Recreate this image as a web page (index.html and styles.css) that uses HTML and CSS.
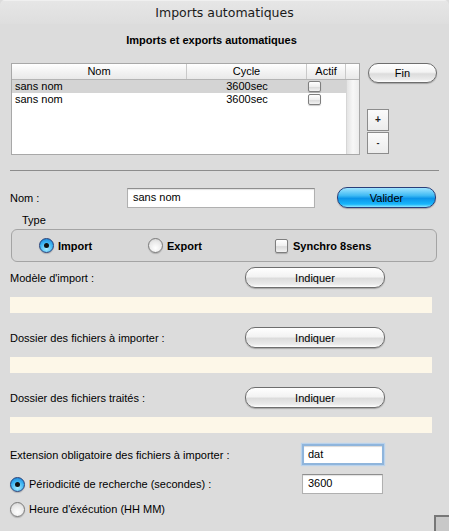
FILE: index.html
```html
<!DOCTYPE html>
<html lang="fr">
<head>
<meta charset="utf-8">
<title>Imports automatiques</title>
<link rel="stylesheet" href="styles.css">
</head>
<body>
<div class="win">
  <div class="titlebar">Imports automatiques</div>
  <div class="subtitle">Imports et exports automatiques</div>

  <div class="top">
    <div class="table">
      <div class="thead">
        <div class="th c-nom">Nom</div>
        <div class="th c-cycle">Cycle</div>
        <div class="th c-actif">Actif</div>
        <div class="th c-sb"></div>
      </div>
      <div class="tbody">
        <div class="rows">
          <div class="tr sel">
            <span class="td c-nom">sans nom</span>
            <span class="td c-cycle">3600sec</span>
            <span class="td c-actif"><span class="cb cb-small"></span></span>
          </div>
          <div class="tr">
            <span class="td c-nom">sans nom</span>
            <span class="td c-cycle">3600sec</span>
            <span class="td c-actif"><span class="cb cb-small"></span></span>
          </div>
        </div>
        <div class="sbtrack"></div>
      </div>
    </div>
    <div class="side">
      <button class="pill fin">Fin</button>
      <button class="sq plus">+</button>
      <button class="sq minus">-</button>
    </div>
  </div>

  <div class="sep"></div>

  <div class="namerow">
    <span class="lbl name-lbl">Nom :</span>
    <span class="field name-field">sans nom</span>
    <button class="pill blue valider">Valider</button>
  </div>

  <div class="type-lbl">Type</div>
  <div class="group">
    <span class="opt opt-import"><span class="radio on"></span><b>Import</b></span>
    <span class="opt opt-export"><span class="radio"></span><b>Export</b></span>
    <span class="opt opt-synchro"><span class="cb"></span><b>Synchro 8sens</b></span>
  </div>

  <div class="pickrow first">
    <span class="lbl">Modèle d'import :</span>
    <button class="pill ind">Indiquer</button>
  </div>
  <div class="strip"></div>

  <div class="pickrow">
    <span class="lbl">Dossier des fichiers à importer :</span>
    <button class="pill ind">Indiquer</button>
  </div>
  <div class="strip"></div>

  <div class="pickrow">
    <span class="lbl">Dossier des fichiers traités :</span>
    <button class="pill ind">Indiquer</button>
  </div>
  <div class="strip"></div>

  <div class="extrow">
    <span class="lbl">Extension obligatoire des fichiers à importer :</span>
    <span class="field focus">dat</span>
  </div>

  <div class="perrow">
    <span class="opt"><span class="radio on"></span><span class="lbl">Périodicité de recherche (secondes) :</span></span>
    <span class="field per-field">3600</span>
  </div>

  <div class="heurerow">
    <span class="opt"><span class="radio"></span><span class="lbl">Heure d'éxécution (HH MM)</span></span>
  </div>

  <div class="grip"></div>
</div>
</body>
</html>
```

FILE: styles.css
```css
* { box-sizing: border-box; }
html, body { margin: 0; padding: 0; background: #dcdcdc; }
body { font-family: "Liberation Sans", Arial, sans-serif; font-size: 11px; color: #000; }

.win {
  width: 449px;
  height: 531px;
  background: #dcdcdc;
  position: relative;
  overflow: hidden;
  border-radius: 5px 5px 0 0;
}

.titlebar {
  height: 24px;
  display: flex;
  align-items: center;
  justify-content: center;
  font-family: "DejaVu Sans", sans-serif;
  font-size: 12.5px;
  color: #1a1a1a;
  background: linear-gradient(#e6e6e6, #dedede);
  border-top: 1px solid #f0f0f0;
}

.subtitle {
  height: 14px;
  margin-top: 9px;
  padding-right: 26px;
  text-align: center;
  font-weight: bold;
  font-size: 11px;
  line-height: 14px;
}

/* table area */
.top {
  display: flex;
  margin-top: 16px;
  padding-left: 11px;
  height: 92px;
}
.table {
  width: 349px;
  height: 92px;
  background: #fff;
  border: 1px solid #a8a8a8;
  display: flex;
  flex-direction: column;
}
.thead {
  display: flex;
  height: 16px;
  border-bottom: 1px solid #b4b4b4;
  background: linear-gradient(#ffffff, #f1f1f1 60%, #e9e9e9);
}
.th {
  font-size: 11px;
  line-height: 15px;
  text-align: center;
  border-right: 1px solid #c9c9c9;
}
.c-nom { width: 175px; }
.c-cycle { width: 120px; }
.c-actif { width: 39px; }
.c-sb { width: 13px; border-right: none; }

.tbody { flex: 1; display: flex; }
.rows { width: 334px; }
.tr { display: flex; height: 13px; line-height: 13px; }
.tr.sel { background: #d4d4d4; }
.td { display: block; }
.tr .c-nom { padding-left: 3px; }
.tr .c-cycle { text-align: center; }
.tr .c-actif { padding-left: 1px; padding-top: 1px; }
.sbtrack {
  flex: 1;
  background: linear-gradient(90deg, #e4e4e4, #f7f7f7 50%, #ececec);
  border-left: 1px solid #d6d6d6;
}

.side {
  display: flex;
  flex-direction: column;
  align-items: flex-start;
  margin-left: 7px;
  padding-top: 0;
}

/* buttons */
.pill {
  font-family: "Liberation Sans", Arial, sans-serif;
  font-size: 11px;
  color: #000;
  height: 20px;
  padding: 0;
  border: 1px solid #6e6e6e;
  border-radius: 10px;
  background: linear-gradient(#ffffff 0%, #f3f3f3 45%, #dcdcdc 55%, #eaeaea 85%, #ffffff 100%);
  box-shadow: 0 1px 1px rgba(0,0,0,0.25);
  line-height: 18px;
  text-align: center;
}
.fin { width: 69px; margin-left: 1px; }
.sq {
  width: 22px;
  height: 22px;
  padding: 0;
  border: 1px solid #8c8c8c;
  background: linear-gradient(#fbfbfb, #ececec);
  font-family: "Liberation Sans", Arial, sans-serif;
  font-size: 10px;
  font-weight: bold;
  color: #222;
  line-height: 18px;
}
.plus { margin-top: 26px; }
.minus { margin-top: 1px; font-size: 9px; }

.blue {
  border-color: #2a3f7a;
  background: linear-gradient(#9fe4ff 0%, #3fbaf4 40%, #0b94e8 55%, #18b6fb 85%, #8ee8ff 100%);
}

.sep {
  margin: 15px 10px 0 10px;
  height: 1px;
  background: #8c8c8c;
}

.namerow {
  display: flex;
  align-items: center;
  margin-top: 16px;
  padding-left: 10px;
  height: 21px;
}
.name-lbl { width: 117px; }
.field {
  display: block;
  background: #fff;
  border: 1px solid #b0b0b0;
  border-top-color: #8e8e8e;
  box-shadow: inset 0 1px 1px rgba(0,0,0,0.12);
  font-size: 11px;
  line-height: 17px;
  padding-left: 5px;
}
.name-field { width: 188px; height: 20px; }
.valider { width: 99px; height: 21px; margin-left: 22px; }

.type-lbl {
  padding-left: 22px;
  margin-top: 5px;
  height: 14px;
  line-height: 14px;
}
.group {
  margin: 2px 12px 0 11px;
  height: 33px;
  border: 1px solid #a4a4a4;
  border-radius: 6px;
  background: #d8d8d8;
  position: relative;
  display: flex;
  align-items: center;
  padding-left: 27px;
}
.opt { display: flex; align-items: center; }
.opt b { font-weight: bold; margin-left: 4px; }
.opt-import { width: 109px; }
.opt-export { width: 127px; }
.opt-synchro b { margin-left: 5px; }

.radio {
  display: inline-block;
  width: 15px;
  height: 15px;
  border-radius: 50%;
  border: 1px solid #7a7a7a;
  background: radial-gradient(circle at 50% 70%, #ffffff, #e8e8e8 60%, #c8c8c8);
  box-shadow: 0 1px 1px rgba(0,0,0,0.2);
  position: relative;
  flex: none;
}
.radio.on {
  border-color: #24407a;
  background: radial-gradient(circle at 50% 75%, #a8ecff, #3cb4f2 55%, #1676cf);
}
.radio.on::after {
  content: "";
  position: absolute;
  width: 5px;
  height: 5px;
  border-radius: 50%;
  background: #111;
  left: 4px;
  top: 4px;
}
.cb {
  display: inline-block;
  width: 13px;
  height: 14px;
  border: 1px solid #7e7e7e;
  border-radius: 2px;
  background: linear-gradient(#ffffff, #efefef 50%, #dadada 55%, #f2f2f2);
  box-shadow: 0 1px 1px rgba(0,0,0,0.2);
  flex: none;
}
.cb-small { width: 13px; height: 11px; }

.pickrow {
  display: flex;
  align-items: center;
  padding-left: 10px;
  height: 21px;
  margin-top: 14px;
}
.pickrow.first { margin-top: 5px; }
.pickrow .lbl { width: 235px; }
.ind { width: 140px; height: 21px; }

.strip {
  margin: 9px 17px 0 10px;
  height: 16px;
  background: #fdf7e8;
}

.extrow {
  display: flex;
  align-items: center;
  padding-left: 10px;
  height: 21px;
  margin-top: 11px;
}
.extrow .lbl { width: 292px; }
.focus {
  width: 82px;
  height: 21px;
  border: 2px solid #8fb5dc;
  box-shadow: 0 0 1px 1px #b9d2ec, inset 0 1px 1px rgba(0,0,0,0.15);
  padding-left: 4px;
}

.perrow {
  display: flex;
  align-items: center;
  height: 20px;
  margin-top: 9px;
  padding-left: 10px;
}
.perrow .opt { width: 292px; }
.opt .lbl { margin-left: 4px; }
.per-field { width: 81px; height: 20px; }

.heurerow {
  display: flex;
  align-items: center;
  height: 18px;
  margin-top: 6px;
  padding-left: 10px;
}

.grip {
  position: absolute;
  right: 0;
  bottom: 0;
  width: 15px;
  height: 16px;
  border-top: 2px solid #777;
  border-left: 2px solid #777;
  background: #c8c8c8;
}
```
